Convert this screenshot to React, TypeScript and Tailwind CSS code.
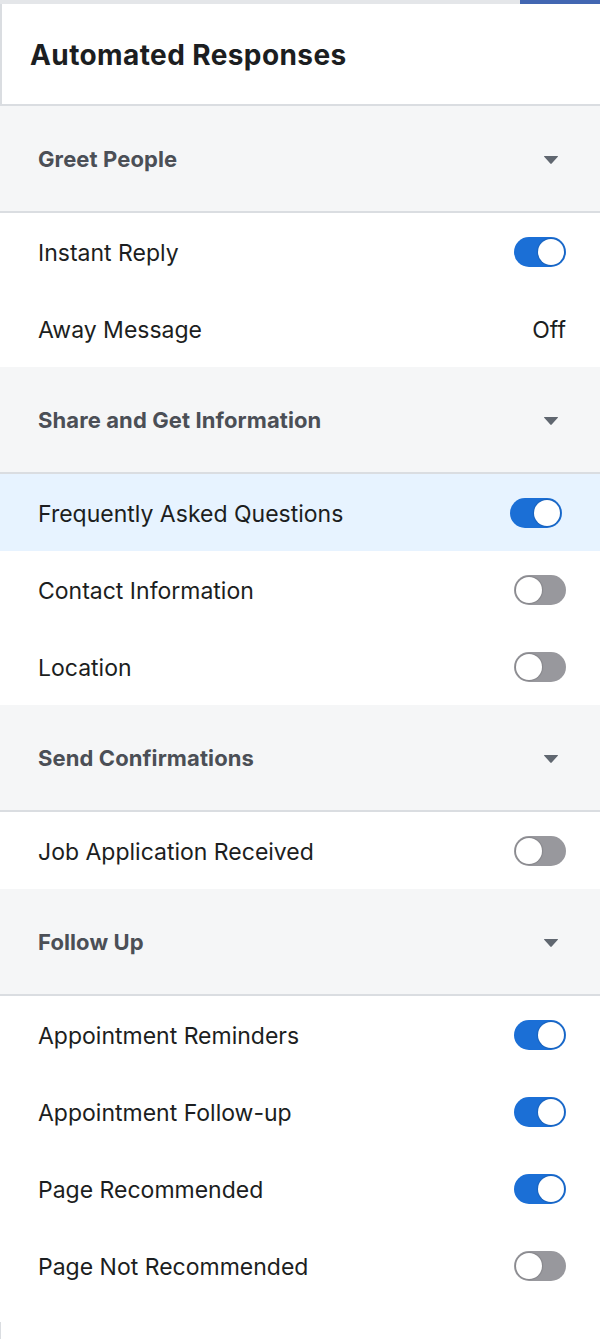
type Row = { label: string; on?: boolean; text?: string; highlight?: boolean };
type Section = { title: string; rows: Row[] };

const sections: Section[] = [
  {
    title: "Greet People",
    rows: [
      { label: "Instant Reply", on: true },
      { label: "Away Message", text: "Off" },
    ],
  },
  {
    title: "Share and Get Information",
    rows: [
      { label: "Frequently Asked Questions", on: true, highlight: true },
      { label: "Contact Information", on: false },
      { label: "Location", on: false },
    ],
  },
  {
    title: "Send Confirmations",
    rows: [{ label: "Job Application Received", on: false }],
  },
  {
    title: "Follow Up",
    rows: [
      { label: "Appointment Reminders", on: true },
      { label: "Appointment Follow-up", on: true },
      { label: "Page Recommended", on: true },
      { label: "Page Not Recommended", on: false },
    ],
  },
];

function Toggle({ on }: { on: boolean }) {
  return (
    <div
      className={
        on
          ? "w-[52px] h-[30px] rounded-full bg-[#1b6fd6] flex items-center justify-end p-[2px]"
          : "w-[52px] h-[30px] rounded-full bg-[#98989d] flex items-center justify-start p-[2px]"
      }
    >
      <div className="w-[26px] h-[26px] rounded-full bg-white shadow-[0_0_1px_1px_rgba(0,0,0,0.12)]" />
    </div>
  );
}

function Caret() {
  return (
    <svg width="16" height="10" viewBox="0 0 16 10">
      <path d="M1.5 1 H14.5 Q15.5 1 14.8 1.8 L8.7 8.6 Q8 9.4 7.3 8.6 L1.2 1.8 Q0.5 1 1.5 1 Z" fill="#606770" />
    </svg>
  );
}

export default function App() {
  return (
    <div className="w-[600px] min-h-[1339px] bg-white font-['Inter','Liberation_Sans',sans-serif]">
      {/* top strip */}
      <div className="flex h-[4px]">
        <div className="flex-1 bg-[#e4e6e9]" />
        <div className="w-[80px] bg-[#4267b2]" />
      </div>

      {/* header */}
      <div className="h-[102px] border-l-2 border-b-2 border-[#dadde1] flex items-center pl-[28px] pt-[2px]">
        <h1 className="text-[28px] font-bold text-[#1c1e21] tracking-[0.4px]">
          Automated Responses
        </h1>
      </div>

      {sections.map((section) => (
        <div key={section.title}>
          <div className="h-[107px] bg-[#f5f6f7] border-b-2 border-[#dadde1] flex items-center justify-between pl-[38px] pr-[41px] pt-[2px]">
            <span className="text-[22px] font-bold text-[#4b4f56] tracking-[0.1px]">{section.title}</span>
            <Caret />
          </div>
          {section.rows.map((row) => (
            <div
              key={row.label}
              className={
                row.highlight
                  ? "h-[77px] bg-[#e7f3ff] flex items-center justify-between pl-[38px] pr-[38px]"
                  : "h-[77px] bg-white flex items-center justify-between pl-[38px] pr-[34px]"
              }
            >
              <span className="text-[23px] text-[#1c1e21] pt-[3px]">{row.label}</span>
              {row.text ? (
                <span className="text-[23px] text-[#1c1e21] pt-[3px]">{row.text}</span>
              ) : (
                <Toggle on={!!row.on} />
              )}
            </div>
          ))}
        </div>
      ))}

      <div className="h-[35px] flex">
        <div className="w-[1px] mt-[18px] bg-[#dadde1]" />
      </div>
    </div>
  );
}
